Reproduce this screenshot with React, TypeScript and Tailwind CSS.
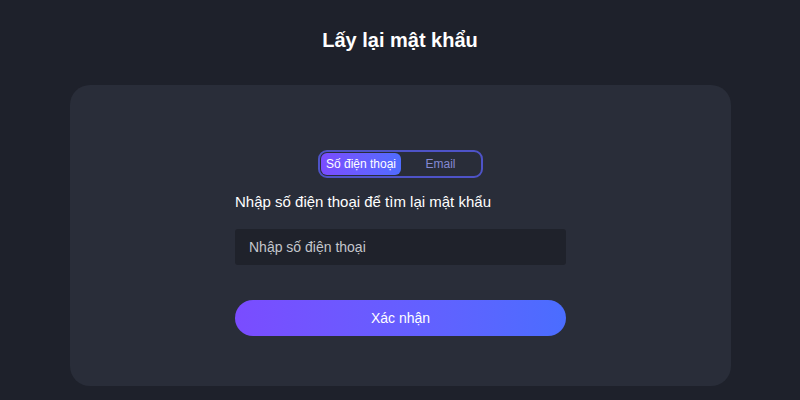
import React from "react";

export default function App() {
  return (
    <div
      className="w-[800px] h-[400px] bg-[#1e212b] overflow-hidden flex flex-col"
      style={{ fontFamily: '"Liberation Sans", Arial, sans-serif' }}
    >
      <h1 className="text-white text-[20px] font-bold text-center pt-[28px] leading-[24px]">
        Lấy lại mật khẩu
      </h1>
      <div className="mt-[33px] mx-[70px] w-[661px] h-[301px] rounded-[20px] bg-[#292d39] flex flex-col items-center pt-[65px]">
        <div className="w-[165px] h-[28px] rounded-[9px] border-2 border-[#4e53c8] p-px flex items-center">
          <div className="w-[80px] h-[22px] rounded-[6px] bg-gradient-to-r from-[#7a4cff] to-[#4f6cff] flex items-center justify-center text-white text-[12px]">
            Số điện thoại
          </div>
          <div className="flex-1 flex items-center justify-center text-[12px] text-[#8589d4]">
            Email
          </div>
        </div>
        <div className="w-[331px] flex flex-col">
          <div className="mt-[14px] text-[15px] leading-[20px] text-white">
            Nhập số điện thoại để tìm lại mật khẩu
          </div>
          <input
            className="mt-[17px] h-[36px] rounded-[3px] bg-[#1f222b] px-[14px] text-[14px] text-white placeholder:text-[#c4c6cc] outline-none"
            placeholder="Nhập số điện thoại"
          />
          <button className="mt-[35px] h-[36px] rounded-full bg-gradient-to-r from-[#7a4cff] to-[#4a6dff] text-white text-[14px]">
            Xác nhận
          </button>
        </div>
      </div>
    </div>
  );
}
